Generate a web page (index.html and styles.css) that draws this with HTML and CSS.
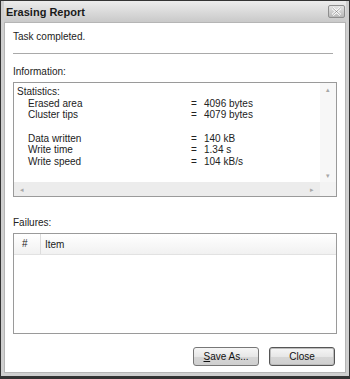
FILE: index.html
```html
<!DOCTYPE html>
<html lang="en">
<head>
    <meta charset="UTF-8">
    <title>Erasing Report</title>
    <link rel="stylesheet" href="styles.css">
</head>
<body>
    <div class="window">
        <div class="titlebar">
            <span class="title">Erasing Report</span>
            <span class="close-btn">
                <svg width="11" height="9" viewBox="0 0 11 9">
                    <path d="M1.5 1 L9.5 8 M9.5 1 L1.5 8" stroke="#ffffff" stroke-width="2.4"/>
                    <path d="M1.5 1 L9.5 8 M9.5 1 L1.5 8" stroke="#8a8a8a" stroke-width="0.8"/>
                </svg>
            </span>
        </div>

        <div class="client">
            <p class="status">Task completed.</p>
            <div class="separator"></div>

            <p class="label">Information:</p>
            <div class="info-box">
                <div class="info-text">
                    <div>Statistics:</div>
                    <div class="stat"><span class="name">Erased area</span><span class="eq">=</span><span>4096 bytes</span></div>
                    <div class="stat"><span class="name">Cluster tips</span><span class="eq">=</span><span>4079 bytes</span></div>
                    <div class="stat blank"></div>
                    <div class="stat"><span class="name">Data written</span><span class="eq">=</span><span>140 kB</span></div>
                    <div class="stat"><span class="name">Write time</span><span class="eq">=</span><span>1.34 s</span></div>
                    <div class="stat"><span class="name">Write speed</span><span class="eq">=</span><span>104 kB/s</span></div>
                </div>
                <div class="vscroll">
                    <span class="arrow">&#9652;</span>
                    <span class="arrow">&#9662;</span>
                </div>
                <div class="hscroll">
                    <span class="arrow">&#9666;</span>
                    <span class="arrow">&#9656;</span>
                </div>
                <div class="corner"></div>
            </div>

            <p class="label failures">Failures:</p>
            <div class="table-box">
                <div class="table-head">
                    <span class="col-num">#</span>
                    <span class="col-item">Item</span>
                </div>
            </div>

            <div class="buttons">
                <button class="btn"><u>S</u>ave As...</button>
                <button class="btn btn-default">Close</button>
            </div>
        </div>
    </div>
</body>
</html>
```

FILE: styles.css
```css
body {
    margin: 0;
    padding: 0;
    background-color: #2a2a2a;
    font-family: "Liberation Sans", Arial, sans-serif;
    font-size: 10px;
    color: #222;
}

.window {
    width: 350px;
    height: 379px;
    box-sizing: border-box;
    border: 1px solid #333;
    border-bottom-width: 3px;
    background: #cfcfcf;
    padding: 0 3px 3px 3px;
    display: flex;
    flex-direction: column;
}

.titlebar {
    height: 21px;
    display: flex;
    align-items: center;
    justify-content: space-between;
    padding: 0 1px 0 2px;
    background: linear-gradient(#ececec, #c9c9c9);
}

.title {
    font-size: 11px;
    font-weight: bold;
    color: #1a1a1a;
}

.close-btn {
    width: 17px;
    height: 13px;
    box-sizing: border-box;
    border: 1px solid #8e8e8e;
    border-radius: 2px;
    background: linear-gradient(#e4e4e4, #b9b9b9);
    display: flex;
    align-items: center;
    justify-content: center;
}

.client {
    flex: 1;
    background: #fff;
    border: 1px solid #b5b5b5;
    padding: 0 8px 0 8px;
    display: flex;
    flex-direction: column;
}

p {
    margin: 0;
}

.status {
    margin-top: 8px;
}

.separator {
    height: 1px;
    background: #a9a9a9;
    margin: 11px 4px 12px 0;
}

.label {
    margin-bottom: 5px;
}

.info-box {
    height: 113px;
    border: 1px solid #9a9a9a;
    display: grid;
    grid-template-columns: 1fr 16px;
    grid-template-rows: 1fr 14px;
}

.info-text {
    padding: 3px 3px 2px 3px;
    line-height: 11.5px;
}

.stat {
    display: flex;
    padding-left: 11px;
}

.stat.blank {
    height: 12px;
}

.name {
    width: 163px;
}

.eq {
    width: 13px;
}

.vscroll {
    background: #f7f7f7;
    display: flex;
    flex-direction: column;
    justify-content: space-between;
    align-items: center;
    padding: 2px 0;
}

.hscroll {
    background: #ececec;
    display: flex;
    justify-content: space-between;
    align-items: center;
    padding: 0 6px;
}

.arrow {
    color: #a8a8a8;
    font-size: 7px;
    line-height: 9px;
}

.corner {
    background: #f3f3f3;
}

.failures {
    margin-top: 20px;
}

.table-box {
    height: 99px;
    border: 1px solid #9a9a9a;
}

.table-head {
    height: 20px;
    display: flex;
    align-items: center;
    background: linear-gradient(#ffffff, #f1f1f1);
    border-bottom: 1px solid #e2e2e2;
}

.col-num {
    width: 18px;
    padding-left: 8px;
    border-right: 1px solid #dcdcdc;
    height: 20px;
    line-height: 20px;
}

.col-item {
    padding-left: 4px;
}

.buttons {
    display: flex;
    justify-content: flex-end;
    gap: 10px;
    margin-top: 13px;
    padding-right: 2px;
}

.btn {
    width: 66px;
    height: 19px;
    font-family: "Liberation Sans", Arial, sans-serif;
    font-size: 10px;
    color: #111;
    border: 1px solid #777;
    border-radius: 3px;
    background: linear-gradient(#f6f6f6 0%, #e7e7e7 50%, #d6d6d6 51%, #cfcfcf 100%);
    padding: 0;
}

.btn-default {
    border-color: #555;
    box-shadow: inset 0 0 0 1px #bcbcbc;
}
```
